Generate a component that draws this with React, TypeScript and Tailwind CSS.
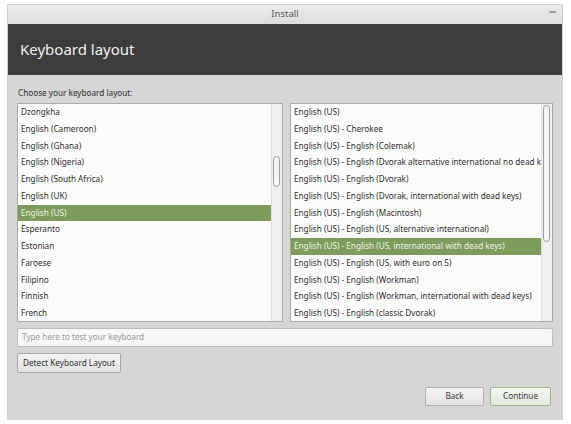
import React from "react";

const leftItems = [
  "Dzongkha",
  "English (Cameroon)",
  "English (Ghana)",
  "English (Nigeria)",
  "English (South Africa)",
  "English (UK)",
  "English (US)",
  "Esperanto",
  "Estonian",
  "Faroese",
  "Filipino",
  "Finnish",
  "French",
];

const rightItems = [
  "English (US)",
  "English (US) - Cherokee",
  "English (US) - English (Colemak)",
  "English (US) - English (Dvorak alternative international no dead keys)",
  "English (US) - English (Dvorak)",
  "English (US) - English (Dvorak, international with dead keys)",
  "English (US) - English (Macintosh)",
  "English (US) - English (US, alternative international)",
  "English (US) - English (US, international with dead keys)",
  "English (US) - English (US, with euro on 5)",
  "English (US) - English (Workman)",
  "English (US) - English (Workman, international with dead keys)",
  "English (US) - English (classic Dvorak)",
];

interface ListBoxProps {
  items: Array<string>;
  selected: number;
  thumbTop: number;
  thumbHeight: number;
  width: string;
}

const ListBox: React.FC<ListBoxProps> = (props) => {
  return (
    <div
      className={`flex h-[219px] ${props.width} border border-[#a9a9a9] bg-[#fbfbfb]`}
    >
      <div className="flex-1 overflow-hidden">
        {props.items.map((item, index) => (
          <div
            key={index}
            className={`flex h-[16.75px] items-center whitespace-nowrap pl-[3px] text-[8.2px] ${
              index === props.selected
                ? "bg-[#7d9b5b] text-[#eef3e8]"
                : "text-[#2e2e2e]"
            }`}
          >
            {item}
          </div>
        ))}
      </div>
      <div className="relative w-[11px] border-l border-[#dedede] bg-[#efefef]">
        <div
          className="absolute left-[1px] w-[7px] rounded-[4px] border border-[#9d9d9d] bg-[#f4f4f4]"
          style={{ top: props.thumbTop, height: props.thumbHeight }}
        />
      </div>
    </div>
  );
};

export default function App() {
  return (
    <div
      className="h-[424px] w-[571px] bg-white pl-[7px] pt-[4px]"
      style={{ fontFamily: '"Noto Sans", "Open Sans", sans-serif' }}
    >
      <div className="flex h-[416px] w-[556px] flex-col border border-[#d2d2d2]">
        <div className="relative flex h-[19px] items-center justify-center bg-gradient-to-b from-[#ececec] to-[#dddddd] text-[9.5px] text-[#5a5a5a]">
          Install
          <span className="absolute right-[6px] top-[6px] h-[2px] w-[7px] rounded-sm bg-[#9a9a9a]" />
        </div>
        <div className="flex h-[51px] items-center bg-[#3d3d3d] pl-[12px] text-[15px] text-[#f0f0f0]">
          Keyboard layout
        </div>
        <div className="flex flex-1 flex-col bg-[#d6d6d6] px-[9px] pt-[12px]">
          <div className="h-[12px] pl-[1px] text-[8.2px] leading-[12px] text-[#2e2e2e]">
            Choose your keyboard layout:
          </div>
          <div className="mt-[4px] flex gap-[7px]">
            <ListBox
              items={leftItems}
              selected={6}
              thumbTop={52}
              thumbHeight={31}
              width="w-[266px]"
            />
            <ListBox
              items={rightItems}
              selected={8}
              thumbTop={1}
              thumbHeight={137}
              width="w-[263px]"
            />
          </div>
          <div className="mt-[6px] flex h-[19px] w-[536px] items-center rounded-[2px] border border-[#bcbcbc] bg-[#f6f6f6] pl-[4px] text-[8.2px] text-[#9a9a9a]">
            Type here to test your keyboard
          </div>
          <div className="mt-[6px] flex">
            <button className="flex h-[20px] items-center rounded-[2px] border border-[#a8a8a8] bg-gradient-to-b from-[#f3f3f3] to-[#e2e2e2] px-[5px] text-[8.2px] text-[#2e2e2e]">
              Detect Keyboard Layout
            </button>
          </div>
          <div className="mt-[14px] flex w-[536px] justify-end gap-[6px] pr-[2px]">
            <button className="flex h-[19px] w-[59px] items-center justify-center rounded-[2px] border border-[#b0b0b0] bg-gradient-to-b from-[#f4f4f4] to-[#e3e3e3] text-[8.2px] text-[#3a3a3a]">
              Back
            </button>
            <button className="flex h-[19px] w-[61px] items-center justify-center rounded-[2px] border border-[#9fb58a] bg-gradient-to-b from-[#f4f6f0] to-[#e4e8de] text-[8.2px] text-[#3a3a3a]">
              Continue
            </button>
          </div>
        </div>
      </div>
    </div>
  );
}
